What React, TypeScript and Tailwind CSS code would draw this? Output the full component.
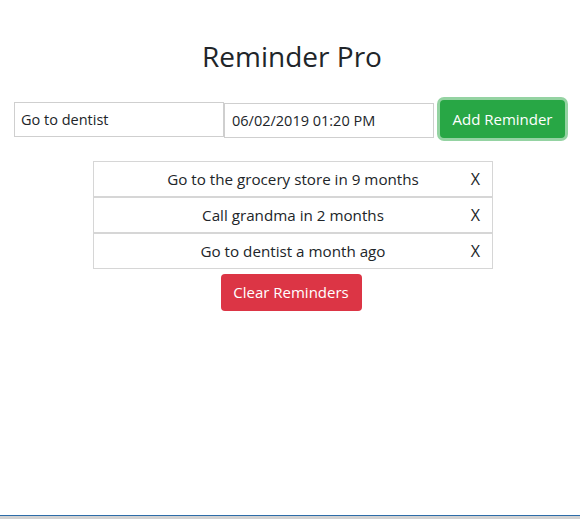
import React from 'react'

const reminders = [
    'Go to the grocery store in 9 months',
    'Call grandma in 2 months',
    'Go to dentist a month ago',
]

function App() {
    return (
        <div className="relative h-[519px] w-[580px] bg-white font-['Open_Sans',sans-serif] text-[#212529]">
            <div className="flex flex-col items-center pt-[34px]">
                <h1 className="ml-[4px] text-[28px] leading-[44px] font-normal">Reminder Pro</h1>
                <div className="mt-[22px] flex w-full items-center pl-[14px]">
                    <input
                        className="h-[35px] w-[210px] border border-[#cfcfcf] px-[6px] text-[14.5px] outline-none"
                        defaultValue="Go to dentist"
                    />
                    <input
                        className="mt-[2px] h-[35px] w-[210px] border border-[#cfcfcf] px-[7px] text-[14.5px] outline-none"
                        defaultValue="06/02/2019 01:20 PM"
                    />
                    <button
                        type="button"
                        className="ml-[6px] h-[38px] w-[125px] rounded-[4px] bg-[#28a745] text-[15px] text-white ring-[3px] ring-[#94d3a2]"
                    >
                        Add Reminder
                    </button>
                </div>
                <ul className="mt-[23px] ml-[6px] w-[400px]">
                    {reminders.map((r) => (
                        <li key={r} className="grid h-[36px] grid-cols-[24px_1fr_24px] items-center border border-[#d6d6d6] px-[12px] text-[15.2px]">
                            <span />
                            <span className="text-center">{r}</span>
                            <span className="text-right text-[16px]">X</span>
                        </li>
                    ))}
                </ul>
                <button
                    type="button"
                    className="mt-[5px] ml-[2px] h-[37px] w-[141px] rounded-[4px] bg-[#dc3545] text-[15px] text-white"
                >
                    Clear Reminders
                </button>
            </div>
            <div className="absolute bottom-0 left-0 right-0 h-[4px] border-t border-[#2d6ca8] bg-[#d2d2d2]" />
        </div>
    )
}

export default App
